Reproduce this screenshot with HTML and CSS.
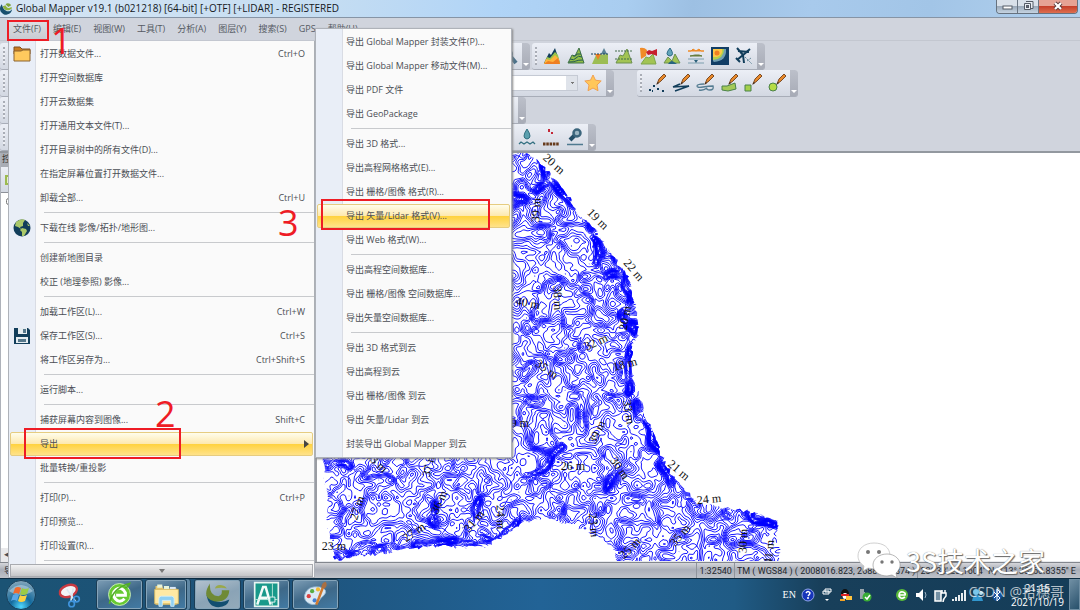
FILE: index.html
```html
<!DOCTYPE html>
<html lang="zh-CN">
<head>
<meta charset="utf-8">
<title>Global Mapper v19.1</title>
<link rel="stylesheet" href="styles.css">
</head>
<body>
<header class="titlebar">
  <svg class="app-icon" viewBox="0 0 14 14"><path d="M2 3A6.500 6.500 0 1 0 13 8C11 12 4 12 2 3z" fill="#17506f"/><path d="M3 5c1 5 7 6 10 2l-1-1c-2 2-5 1-6-2z" fill="#8fb540"/><path d="M6 3c2-2 5-1 6 1l-3 2z" fill="#7fa43a"/></svg>
  <h1 class="title">Global Mapper v19.1 (b021218) [64-bit] [+OTF] [+LIDAR] - REGISTERED</h1>
  <div class="window-buttons">
    <button class="wb" aria-label="最小化"><svg viewBox="0 0 20 13"><rect x="6" y="6" width="9" height="3" fill="#fff" stroke="#555c66"/></svg></button>
    <button class="wb" aria-label="还原"><svg viewBox="0 0 20 13"><path d="M8 1.500h7v7h-2M6.500 3.500h6v6h-6z" fill="#e8edf3" stroke="#555c66"/><rect x="8.500" y="5.500" width="2" height="2" fill="#667" stroke="#555c66"/></svg></button>
    <button class="wb wb-close" aria-label="关闭"><svg viewBox="0 0 20 13"><path d="M7 3l6 6M13 3l-6 6" stroke="#5b3a3a" stroke-width="4"/><path d="M7 3l6 6M13 3l-6 6" stroke="#fff" stroke-width="2.200"/></svg></button>
  </div>
</header>

<nav class="menubar">
  <button class="mb mb-open">文件(F)</button><button class="mb">编辑(E)</button><button class="mb">视图(W)</button><button class="mb">工具(T)</button><button class="mb">分析(A)</button><button class="mb">图层(Y)</button><button class="mb">搜索(S)</button><button class="mb">GPS</button><button class="mb">帮助(H)</button>
</nav>

<section class="toolbars">
  <div class="row">
    <div class="bar bar-a"><span class="grip"></span><span class="tools tools-end"><button class="tool" aria-label="查找"><svg viewBox="0 0 18 18"><circle cx="8" cy="7" r="4" fill="none" stroke="#4b7189" stroke-width="2"/><path d="M11 10l5 6" stroke="#4b7189" stroke-width="4"/></svg></button></span><span class="more"></span></div>
    <div class="bar"><span class="grip"></span><span class="tools">
      <button class="tool" aria-label="地形着色"><svg viewBox="0 0 18 18"><path d="M1 16l5-10 2 2 4-7 5 15z" fill="#123e5b"/><path d="M1 17l3-7 3 1 5-6 3 3 2 9z" fill="#9bc44a"/><path d="M1 17l2-5 4 1 5-5 4 4 1 5z" fill="#ffb43c"/><path d="M1 17l4-3 5 1 5-4 2 6z" fill="#ef7f22"/></svg></button>
      <button class="tool" aria-label="等高线"><svg viewBox="0 0 18 18"><path d="M1 16l4-8 3 1 4-8 5 15z" fill="#92bf48" stroke="#3d7048"/><path d="M3 12q4 2 6-1t6-1M2 15q5 0 7-1t7-1M6 9q3 1 4-2h4" fill="none" stroke="#245a55"/></svg></button>
      <button class="tool" aria-label="剖面"><svg viewBox="0 0 18 18"><path d="M10 7l3-6 3 6z" fill="#5b8296"/><path d="M1 17l4-9 12-1v10z" fill="#9cbd54"/><path d="M4 7h6l-3 6z" fill="#ef7f22"/><path d="M0 7h17" stroke="#123e5b" stroke-dasharray="2 1"/></svg></button>
      <button class="tool" aria-label="填挖"><svg viewBox="0 0 18 18"><path d="M1 16l4-8 3 1 4-7 5 14z" fill="#a2c454" stroke="#6d9150"/><path d="M0 4h17M0 12h17" stroke="#456d4d" stroke-dasharray="2 1"/></svg></button>
      <button class="tool" aria-label="视域"><svg viewBox="0 0 18 18"><path d="M2 17l5-7 3 1 4-4 3 10z" fill="#a2c454" stroke="#7fa64c"/><path d="M1 1q4-1 7 2l-1 6-5 3z" fill="#f08b29"/><path d="M7 5l3-2 3 1 5-2v7l-5-2-4 1z" fill="#c71f2d"/></svg></button>
      <button class="tool" aria-label="流域"><svg viewBox="0 0 18 18"><path d="M1 16l4-6 4 4 3-7 5 9z" fill="#a2c454" stroke="#6d9150"/><path d="M7 1q-6 7 0 8 5-1 0-8z" fill="#63a5ba" stroke="#2c6b85"/><path d="M5 17q3-5 6-2l3 2z" fill="#27647f"/></svg></button>
      <button class="tool" aria-label="分割"><svg viewBox="0 0 18 18"><path d="M1 4h3l2-2 3 2 3-2 2 2h3z" fill="#ef8a26" stroke="#ef8a26"/><path d="M3 9h12l-3-1-4 0z" fill="#667d3c" stroke="#667d3c"/><path d="M1 12h16M1 16h16" stroke="#7d9fae"/><path d="M7 13h4l-2 3z" fill="#2a607a"/></svg></button>
      <button class="tool" aria-label="栅格"><svg viewBox="0 0 18 18"><path d="M0 0h18v18H0z" fill="#123e66"/><path d="M2 2h13q1 12-12 13l-1-1z" fill="#6f9eb1"/><path d="M2 2h11q0 10-11 11z" fill="#b3cf4b"/><path d="M2 2h9q1 6-5 8H2z" fill="#ffc846"/><circle cx="6" cy="6" r="2.500" fill="#ef7f22"/></svg></button>
      <button class="tool" aria-label="飞行"><svg viewBox="0 0 18 18"><path d="M8 8L2 1M7 9L15 2M3 4l11 1M8 8l1 8M8 8l-6 5M1 11l4 4" stroke="#123e5b" stroke-width="2"/><path d="M10 10l7 7M12 14l4-3" stroke="#678a9c" stroke-dasharray="2 1"/></svg></button>
    </span><span class="more"></span></div>
  </div>
  <div class="row">
    <div class="bar bar-b"><span class="grip"></span><span class="tools tools-end"><select class="combo" aria-label="收藏"><option></option></select><button class="tool" aria-label="星标"><svg viewBox="0 0 18 18"><path d="M9 1l2.500 5.200 5.700.8-4.200 4 1 5.700L9 14l-5 2.700 1-5.700-4.200-4 5.700-.8z" fill="#ffc75a" stroke="#f0a050"/></svg></button></span><span class="more"></span></div>
    <div class="bar bar-draw"><span class="grip"></span><span class="tools">
      <button class="tool" aria-label="画点"><svg viewBox="0 0 18 18"><path d="M1 16h2M5 12h2M9 15h2M14 17h2M4 17h1" stroke="#123e5b" stroke-width="2"/><use href="#brush"/></svg></button>
      <button class="tool" aria-label="画线"><svg viewBox="0 0 18 18"><path d="M1 13l16-1L3 17M1 13l7-3" fill="none" stroke="#123e5b" stroke-width="1.500"/><use href="#brush"/></svg></button>
      <button class="tool" aria-label="手绘线"><svg viewBox="0 0 18 18"><path d="M8 10q-7 0-7 2t6 1 10-1q1 4-3 4t-3-2q-4 3-8 2" fill="none" stroke="#557d92" stroke-width="1.300"/><use href="#brush"/></svg></button>
      <button class="tool" aria-label="画面"><svg viewBox="0 0 18 18"><path d="M2 12l5 0 8-3 1 6-8 2-6-1z" fill="#a4c957" stroke="#4a8248"/><use href="#brush"/></svg></button>
      <button class="tool" aria-label="画矩形"><svg viewBox="0 0 18 18"><path d="M1 11h6v6H1z" fill="#a4d04b" stroke="#4a8248"/><use href="#brush"/></svg></button>
      <button class="tool" aria-label="画圆"><svg viewBox="0 0 18 18"><circle cx="5" cy="13" r="4" fill="#b6dc45" stroke="#4a8248"/><use href="#brush"/></svg></button>
    </span><span class="more"></span></div>
  </div>
  <div class="row"><div class="bar bar-c"><span class="grip"></span><span class="tools"></span><span class="more"></span></div></div>
  <div class="row"><div class="bar bar-d"><span class="grip"></span><span class="tools tools-end">
      <button class="tool" aria-label="水位"><svg viewBox="0 0 18 18"><path d="M9 1q-6 9 0 10 6-1 0-10z" fill="#5ba0ae" stroke="#326f80"/><path d="M1 16l2-2 3 2 3-2 3 2 3-2 2 2" fill="none" stroke="#326f80" stroke-width="1.300"/></svg></button>
      <button class="tool" aria-label="点密度"><svg viewBox="0 0 18 18"><path d="M6 1h2v3H6zM9 4h2v2H9z" fill="#c32736"/><path d="M1 16h16" stroke="#673b1c" stroke-width="3" stroke-dasharray="2.500 .8"/></svg></button>
      <button class="tool" aria-label="设置"><svg viewBox="0 0 18 18"><path d="M1 16.500h16" stroke="#4f7a90" stroke-width="1.500"/><path d="M4 12l5-5" stroke="#244f68" stroke-width="4"/><circle cx="11" cy="5" r="3.500" fill="#9ab5c2" stroke="#3b657c" stroke-width="2.500"/></svg></button>
  </span><span class="more"></span></div></div>
</section>

<main class="workspace">
  <aside class="side">
    <div class="side-title">控</div>
    <div class="side-tools"><svg viewBox="0 0 12 12"><path d="M1 3h10v8H1z" fill="#e5efc8" stroke="#9cba50" stroke-width="2"/></svg></div>
    <div class="side-body"><input class="side-check" type="checkbox" aria-label="图层"></div>
    <div class="side-scroll">◂</div>
  </aside>
  <div class="map"><svg class="map-canvas" id="map" width="764" height="408" viewBox="316 153 764 408" role="img" aria-label="等高线地图"></svg></div>
</main>

<footer class="status">
  <span class="status-main">导</span><span class="status-cell">1:32540</span><span class="status-cell">TM ( WGS84 ) ( 2008016.823, 2688435.874 )</span><span class="status-cell status-pos">23° 38' 23.1604" N, 113° 33' 50.8355" E</span>
</footer>

<div class="taskbar">
  <button class="start" aria-label="开始"><svg viewBox="0 0 32 32"><defs><radialGradient id="orb" cx=".5" cy=".9" r=".9"><stop offset="0" stop-color="#4fd8ff"/><stop offset=".4" stop-color="#146a9d"/><stop offset="1" stop-color="#88a9bc"/></radialGradient></defs><circle cx="16" cy="16" r="14.500" fill="url(#orb)" stroke="#173f5a"/><path d="M4 12Q16 0 28 12q-12 8-24 0z" fill="#dcecf5" opacity=".45"/><path d="M10 9q3-2 6 0l-2 6q-3-2-6 0z" fill="#ef6a2e"/><path d="M17 9q3 2 7 0l-2 6q-4 2-7 0z" fill="#9ccb45"/><path d="M8 16q3-2 6 0l-2 6q-3-2-6 0z" fill="#5aa7e8"/><path d="M15 16q3 2 7 0l-2 6q-4 2-7 0z" fill="#fbd043"/></svg></button>
  <button class="pin" aria-label="截图工具"><svg viewBox="0 0 32 32"><ellipse cx="14" cy="11" rx="11" ry="7" transform="rotate(-20 14 11)" fill="#f3f3f6" stroke="#c93a42" stroke-width="3"/><path d="M12 9l11 15M20 8l-3 16" stroke="#dce8f1" stroke-width="2"/><circle cx="24" cy="21" r="3.500" fill="none" stroke="#3f93dc" stroke-width="2"/><circle cx="18" cy="27" r="3.500" fill="none" stroke="#3f93dc" stroke-width="2"/></svg></button>
  <button class="task" aria-label="浏览器"><svg viewBox="0 0 32 32"><circle cx="16" cy="16" r="13" fill="#67c932" stroke="#d8f3c9"/><path d="M22 21Q16 27 11 21T12 10q7-4 11 4l0 3H12" fill="none" stroke="#fff" stroke-width="3.500"/><path d="M4 27Q8 8 28 3q-2 5-6 5" fill="none" stroke="#51ae27" stroke-width="2"/></svg></button>
  <button class="task task-stack" aria-label="资源管理器"><svg viewBox="0 0 32 32"><path d="M3 6h8l1 3h16v19H3z" fill="#e5c46c"/><path d="M5 4h6v4H5zM13 6h6v4h-6z" fill="#e9f4d9"/><path d="M20 7h7v4h-7z" fill="#dae8f7"/><path d="M2 10h28v17H2z" fill="#ffe9a3" stroke="#d8ba61"/><path d="M7 30v-9q0-3 3-3h12q3 0 3 3v9h-4v-7H11v7z" fill="#8fd0f2" stroke="#d2f0ff"/></svg></button>
  <button class="task task-active" aria-label="Global Mapper"><svg viewBox="0 0 32 32"><path d="M3 16Q5 31 17 31q11 0 13-9-14 8-27-6z" fill="#124e70"/><path d="M7 3Q-4 20 12 24q17 2 18-13l-9 0q1 6-4 7Q6 18 7 3z" fill="#6f8a35"/><path d="M13 9q1-5 8-4 5 1 6 4-6-2-14 0z" fill="#9aa94a"/></svg></button>
  <button class="task" aria-label="AutoCAD"><svg viewBox="0 0 32 32"><path d="M2 2h28v28H2z" fill="#19998a" stroke="#e8f5f2" stroke-width="2"/><path d="M5 28L12 7h3l6 21M8 20h9" fill="none" stroke="#f3fbf8" stroke-width="3"/><path d="M23 3v26M3 22h26" stroke="#c7eee2"/><path d="M20 19h6v6h-6z" fill="#19998a" stroke="#fff"/></svg></button>
  <button class="task" aria-label="画图"><svg viewBox="0 0 32 32"><path d="M3 17Q6 5 21 7q11 3 5 10-4 3-6 7-4 6-11 3T3 17z" fill="#dbe9f4" stroke="#8fb3ce"/><circle cx="8" cy="18" r="2.500" fill="#da4141"/><circle cx="12" cy="12" r="2.500" fill="#59ac42"/><circle cx="19" cy="10" r="2.500" fill="#f1ba35"/><circle cx="15" cy="23" r="2.500" fill="#4380d5"/><path d="M17 28l8-21" stroke="#d27b2f" stroke-width="3"/><path d="M23 8q0-6 5-7 3 4-1 8z" fill="#a96f42"/></svg></button>
  <div class="tray">
    <span class="ime">EN</span>
    <svg class="ti" viewBox="0 0 14 14"><circle cx="7" cy="7" r="6" fill="#1735bb" stroke="#8fa4e8"/><path d="M5 5q2-3 4 0 0 1-2 3m0 1v2" fill="none" stroke="#fff" stroke-width="1.500"/></svg>
    <svg class="ti" viewBox="0 0 14 14"><path d="M5 1h6v3H5zM3 3h6v3H3z" fill="#24506c" stroke="#fff"/><path d="M5 11h4l-2 2z" fill="#fff"/></svg>
    <svg class="ti" viewBox="0 0 14 14"><ellipse cx="6" cy="6" rx="4" ry="5" fill="#111"/><ellipse cx="6" cy="8" rx="2.500" ry="3" fill="#fff"/><path d="M2 7h8" stroke="#d22" stroke-width="2"/><path d="M7 8h6v4H7z" fill="#ffc33d"/><path d="M1 12h5" stroke="#f4a223" stroke-width="2"/></svg>
    <svg class="ti ti-gap" viewBox="0 0 14 14"><path d="M2 1h4v3h1v7H2z" fill="#99a4ac"/><circle cx="9" cy="9" r="4.500" fill="#39ac35"/><path d="M7 9l2 2 3-4" fill="none" stroke="#fff" stroke-width="1.500"/></svg>
    <svg class="ti" viewBox="0 0 14 14"><circle cx="7" cy="7" r="6" fill="#59ba39"/><path d="M10 9q-4 3-6-1 0-5 4-4 3 1 2 3H4" fill="none" stroke="#fff" stroke-width="1.700"/></svg>
    <svg class="ti" viewBox="0 0 14 14"><path d="M2 5h3l4-4v12L5 9H2z" fill="#fff"/><path d="M11 4q2 3 0 6" fill="none" stroke="#9bb3c4"/></svg>
    <svg class="ti" viewBox="0 0 14 14"><path d="M2 3h6v10H2z" fill="#7591a5" stroke="#fff" stroke-width="1.500"/><path d="M8 5h5v3q-3 3-3 6M9 5V2m3 3V2" fill="none" stroke="#fff" stroke-width="1.500"/></svg>
    <svg class="ti" viewBox="0 0 14 14"><path d="M1 13v-2M4 13V9M7 13V7M10 13V5M13 13V2" stroke="#fff" stroke-width="1.800"/></svg>
    <svg class="ti" viewBox="0 0 14 14"><circle cx="5" cy="4" r="3" fill="#79c6eb"/><path d="M1 13q1-7 5-6 5 0 6 6z" fill="#3196ce"/><circle cx="10" cy="5" r="2" fill="#b9e2f1"/></svg>
    <svg class="ti" viewBox="0 0 14 14"><ellipse cx="7" cy="7" rx="5" ry="6" fill="#1553a0"/><path d="M4 4l6 6-3 3V1l3 3-6 6" fill="none" stroke="#fff"/></svg>
    <time class="clock">21:15<br>2021/10/19</time>
    <button class="desk" aria-label="显示桌面"></button>
  </div>
</div>

<div class="popup popup-file" role="menu">
  <button class="mi"><svg class="mi-icon" viewBox="0 0 18 18"><path d="M1 2h6l2 2h8v5H1z" fill="#c97c21" stroke="#805022"/><path d="M1 6h7l2-1h7v11H1z" fill="#ffc95e" stroke="#8a6330"/></svg>打开数据文件...<kbd>Ctrl+O</kbd></button>
  <button class="mi">打开空间数据库</button>
  <button class="mi">打开云数据集</button>
  <button class="mi">打开通用文本文件(T)...</button>
  <button class="mi">打开目录树中的所有文件(D)...</button>
  <button class="mi">在指定屏幕位置打开数据文件...</button>
  <button class="mi">卸载全部...<kbd>Ctrl+U</kbd></button>
  <hr>
  <button class="mi"><svg class="mi-icon" viewBox="0 0 18 18"><circle cx="9" cy="9" r="8.500" fill="#123e5b"/><path d="M3 3q5-4 9-2l-2 3 0 3-3 1 1 2-3-2-3-1zM9 9l4 1 1 2-3 5-2 0v-4l-2-2zM14 4l3 3-2 0z" fill="#abc96a"/></svg>下载在线 影像/拓扑/地形图...</button>
  <hr>
  <button class="mi">创建新地图目录</button>
  <button class="mi">校正 (地理参照) 影像...</button>
  <hr>
  <button class="mi">加载工作区(L)...<kbd>Ctrl+W</kbd></button>
  <button class="mi"><svg class="mi-icon" viewBox="0 0 18 18"><path d="M1 1h14l2 2v14H1z" fill="#123e5b"/><path d="M5 1h9v6H5zM3 10h12v6H3z" fill="#e6edf1"/><path d="M10 2h3v4h-3zM5 12h8v3H5z" fill="#56788c"/></svg>保存工作区(S)...<kbd>Ctrl+S</kbd></button>
  <button class="mi">将工作区另存为...<kbd>Ctrl+Shift+S</kbd></button>
  <hr>
  <button class="mi">运行脚本...</button>
  <hr>
  <button class="mi">捕获屏幕内容到图像...<kbd>Shift+C</kbd></button>
  <button class="mi mi-hot">导出<svg class="arrow" viewBox="0 0 5 8"><path d="M0 0l5 4-5 4z" fill="#444"/></svg></button>
  <button class="mi">批量转换/重投影</button>
  <hr>
  <button class="mi">打印(P)...<kbd>Ctrl+P</kbd></button>
  <button class="mi">打印预览...</button>
  <button class="mi">打印设置(R)...</button>
  <hr>
  <button class="scroller" aria-label="更多"><svg viewBox="0 0 6 4"><path d="M0 0h6L3 4z" fill="#777"/></svg></button>
</div>

<div class="popup popup-export" role="menu">
  <button class="mi">导出 Global Mapper 封装文件(P)...</button>
  <button class="mi">导出 Global Mapper 移动文件(M)...</button>
  <button class="mi">导出 PDF 文件</button>
  <button class="mi">导出 GeoPackage</button>
  <hr>
  <button class="mi">导出 3D 格式...</button>
  <button class="mi">导出高程网格格式(E)...</button>
  <button class="mi">导出 栅格/图像 格式(R)...</button>
  <button class="mi mi-hot">导出 矢量/Lidar 格式(V)...</button>
  <button class="mi">导出 Web 格式(W)...</button>
  <hr>
  <button class="mi">导出高程空间数据库...</button>
  <button class="mi">导出 栅格/图像 空间数据库...</button>
  <button class="mi">导出矢量空间数据库...</button>
  <hr>
  <button class="mi">导出 3D 格式到云</button>
  <button class="mi">导出高程到云</button>
  <button class="mi">导出 栅格/图像 到云</button>
  <button class="mi">导出 矢量/Lidar 到云</button>
  <button class="mi">封装导出 Global Mapper 到云</button>
</div>

<div class="mark mark-1"></div><span class="num num-1">1</span>
<div class="mark mark-2"></div><span class="num num-2">2</span>
<div class="mark mark-3"></div><span class="num num-3">3</span>

<div class="brand"><svg viewBox="0 0 44 38"><path d="M17 1C7 1 1 7 1 14c0 4 2 7 6 10l-1 5 5-3c12 3 22-3 22-12S26 1 17 1z" fill="#fff" stroke="#bbb" stroke-width=".7"/><path d="M30 12c-8 0-14 5-14 11s6 11 14 11l5-1 5 3-1-5c9-8 2-19-9-19z" fill="#fff" stroke="#999" stroke-width=".7"/><circle cx="11" cy="10" r="2" fill="#777"/><circle cx="22" cy="10" r="2" fill="#777"/><circle cx="25" cy="20" r="1.700" fill="#777"/><circle cx="35" cy="20" r="1.700" fill="#777"/></svg><span>3S技术之家</span></div>
<div class="credit">CSDN @拾穗哥</div>

<svg class="defs" aria-hidden="true"><defs><g id="brush"><path d="M9 10l2-5 5-5 2 2-5 5z" fill="#e8892b" stroke="#7c4b24"/><path d="M8 11l2-3 1 1z" fill="#3a2a20"/></g></defs></svg>
<script src="map.js"></script>
</body>
</html>
```

FILE: styles.css
```css
* { box-sizing: border-box; }
body {
  margin: 0;
  min-height: 100vh;
  display: flex;
  flex-direction: column;
  position: relative;
  overflow: hidden;
  background: #d0d4dd;
  color: #4a4e55;
  font: 9px/12px "Open Sans", "Noto Sans CJK SC", sans-serif;
}
button { font: inherit; color: inherit; border: 0; padding: 0; margin: 0; background: none; text-align: left; white-space: nowrap; }
svg { display: block; }
.defs { position: absolute; width: 0; height: 0; }

.titlebar {
  display: flex;
  align-items: flex-start;
  height: 18px;
  padding-right: 2px;
  background: linear-gradient(100deg, #d5e5f4 0, #c5ddf2 30%, #b0d4f7 46%, #a9cdf0 58%, #9dc0e3 64%, #a8caec 75%, #a2c5e7 86%, #b2d0ed 100%);
  border-bottom: 1px solid #8694a5;
}
.app-icon { width: 13px; height: 14px; margin: 1px 3px 0 0; }
.title { flex: 1; margin: 0; font: 400 10px/16px "Open Sans", sans-serif; color: #15181c; white-space: nowrap; }
.window-buttons { display: flex; border: 1px solid #66727f; border-top: 0; border-radius: 0 0 4px 4px; overflow: hidden; }
.wb { width: 21px; height: 13px; border-right: 1px solid #6a7683; background: linear-gradient(#d9e1ea 50%, #9cabbb 50%, #c6d4e2); }
.wb svg { width: 20px; height: 13px; }
.wb-close { width: 38px; border: 0; background: linear-gradient(#e6a294 45%, #c6402b 50%, #dd6f50); }
.wb-close svg { margin: 0 auto; }

.menubar { display: flex; height: 23px; padding: 1px 8px; gap: 2px; border-bottom: 1px solid #c3c7d0; }
.mb { padding: 0 5px; color: #555a63; }
.mb-open { background: linear-gradient(#dfe1e5, #c9ccd2); }

.toolbars { display: flex; flex-direction: column; height: 112px; padding: 2px 0 0; border-bottom: 2px solid #93989f; }
.row { display: flex; gap: 2px; height: 27px; }
.bar { display: flex; height: 27px; border-radius: 3px; overflow: hidden; background: linear-gradient(#eceff6, #d3d8e2); border-bottom: 1px solid #a8adb8; }
.bar-a { width: 530px; }
.bar-b { width: 614px; }
.bar-c { width: 526px; }
.bar-d { width: 596px; }
.bar-draw { margin-left: 21px; }
.grip { width: 2px; margin: 4px 6px 4px 3px; background: repeating-linear-gradient(#a9adb6 0 2px, #eef0f5 2px 4px); }
.tools { flex: 1; display: flex; align-items: center; gap: 6px; padding-right: 4px; }
.tools-end { justify-content: flex-end; }
.tool { width: 18px; height: 18px; }
.tool svg { width: 18px; height: 18px; }
.more { width: 8px; background: linear-gradient(#bcc0ca, #a7abb6); display: flex; align-items: flex-end; justify-content: center; padding-bottom: 3px; }
.more::after { content: ""; border: 3px solid transparent; border-top-color: #fff; border-bottom: 0; }
.combo {
  width: 150px;
  height: 16px;
  border: 1px solid #c5cad4;
  border-radius: 0;
  appearance: none;
  background:
    linear-gradient(#777, #777) 142px 6px / 3px 1px no-repeat,
    linear-gradient(#777, #777) 143px 7px / 1px 1px no-repeat,
    linear-gradient(90deg, #fff 137px, #dfe3ea 137px);
}

.workspace { flex: 1; display: flex; min-height: 0; }
.side { width: 317px; display: flex; flex-direction: column; border-left: 1px solid #aeb2ba; border-right: 2px solid #9a9da3; background: #d9dde5; }
.side-title { height: 14px; padding-left: 1px; background: #a9adb5; color: #333; }
.side-tools { height: 26px; padding: 6px 4px; background: linear-gradient(#eceff6, #d3d8e2); border-bottom: 1px solid #8d9199; }
.side-tools svg { width: 12px; height: 12px; }
.side-body { flex: 1; padding: 5px; background: #fff; }
.side-check { width: 7px; height: 7px; margin: 0; display: block; }
.side-scroll { height: 14px; background: #e9e9eb; padding-left: 3px; }
.map { flex: 1; background: #fff; overflow: hidden; border-bottom: 1px solid #e8eaed; }
.contour { fill: none; stroke: #00f; stroke-width: .9; }
.map-label { font: 12px "Liberation Serif", serif; fill: #111; text-anchor: middle; }

.status { display: flex; height: 16px; font: 9px/16px Roboto, "Noto Sans CJK SC", sans-serif; color: #24282d; background: linear-gradient(#d5d6da, #a9aeb8 45%, #bfc2c9); border-top: 1px solid #83878e; }
.status-main { flex: 1; padding-left: 4px; }
.status-cell { padding: 0 2px; border-left: 1px solid #8f949c; white-space: nowrap; }
.status-pos { padding-right: 4px; }

.taskbar { display: flex; align-items: stretch; height: 32px; background: linear-gradient(90deg, #1b5374 0, #1d527a 25%, #226396 50%, #205b85 68%, #183f5a 76%, #153d59 100%); border-top: 1px solid #0c2c42; }
.start, .pin { display: flex; align-items: center; }
.start { width: 45px; padding-left: 5px; }
.start svg { width: 32px; height: 32px; }
.pin { width: 51px; padding-left: 12px; }
.pin svg { width: 26px; height: 26px; }
.task { display: flex; align-items: center; justify-content: center; width: 47px; margin-right: 2px; border: 1px solid #1b3d55; border-radius: 3px; background: linear-gradient(160deg, #7e9eb6, #3e6888 50%, #427ba5); box-shadow: inset 0 0 0 1px #86a5ba; }
.task svg { width: 27px; height: 27px; }
.task-stack { width: 42px; margin-right: 7px; box-shadow: inset 0 0 0 1px #86a5ba, 3px 0 0 #5f87a4, 4px 0 0 #1b3d55; }
.task-active { background: linear-gradient(160deg, #b4c3cf, #8aa3b6 55%, #94abba); }
.tray { display: flex; align-items: center; gap: 5px; margin-left: auto; color: #fff; }
.ime { font: 10px/12px "Liberation Serif", serif; }
.ti { width: 14px; height: 14px; }
.ti-gap { margin-right: 18px; }
.clock { font-size: 10px; line-height: 14px; text-align: center; margin-left: 2px; }
.desk { width: 11px; align-self: stretch; border: 1px solid #6f8ea3; background: linear-gradient(135deg, #6f8ea3, #27506b); }

.popup { position: absolute; display: flex; flex-direction: column; background: linear-gradient(90deg, #e9eef7 26px, #d9dce4 26px 27px, #fafafa 27px); border: 1px solid #aeb2b9; }
.popup-file { left: 8px; top: 41px; width: 307px; border-top: 0; padding-top: 1px; }
.popup-export { left: 315px; top: 28px; width: 197px; padding: 1px 0; box-shadow: 1px 1px 2px #888; }
.mi { position: relative; display: flex; align-items: center; height: 24px; padding: 0 9px 0 31px; }
.popup-export .mi { padding-left: 30px; }
.mi-icon { position: absolute; left: 4px; top: 3px; width: 18px; height: 18px; }
.mi kbd { margin-left: auto; font: inherit; }
.mi-hot { margin: 0 1px; padding-left: 29px; padding-right: 3px; border: 1px solid #e6cc80; border-radius: 2px; background: linear-gradient(#fffdec, #fde9b0 48%, #ffd23d 50%, #ffe28a); }
.popup-export .mi-hot { padding-left: 28px; }
.arrow { width: 5px; height: 8px; margin-left: auto; }
.popup hr { height: 1px; margin: 2px 0 3px 35px; border: 0; background: #c8cacd; }
.scroller { height: 13px; margin: 0 1px; display: flex; align-items: center; justify-content: center; border: 1px solid #a9abb0; background: linear-gradient(#f2f2f3, #c4c5c8); }
.scroller svg { width: 6px; height: 4px; }

.mark { position: absolute; border: 2px solid #ee1c25; }
.mark-1 { left: 7px; top: 20px; width: 42px; height: 21px; }
.mark-2 { left: 24px; top: 428px; width: 157px; height: 31px; }
.mark-3 { left: 321px; top: 199px; width: 169px; height: 31px; }
.num { position: absolute; color: #ee1c25; font: 36px/36px "Open Sans", sans-serif; }
.num-1 { left: 51px; top: 23px; }
.num-2 { left: 155px; top: 396px; }
.num-3 { left: 278px; top: 205px; }

.brand { position: absolute; right: 35px; bottom: 30px; display: flex; align-items: center; gap: 5px; color: #fff; font: 27px/36px "Noto Sans CJK SC", sans-serif; text-shadow: 1px 1px 1px #666, 0 0 1px #777; }
.brand svg { width: 44px; height: 38px; }
.credit { position: absolute; right: 16px; bottom: 9px; color: #ffffffb0; font: 14px/18px "Open Sans", "Noto Sans CJK SC", sans-serif; }
```

FILE: map.js
```js
const NS = "http://www.w3.org/2000/svg";
const map = document.getElementById("map");

const outline = [
  [321, 440], [321, 153], [528, 153], [545, 170], [556, 183], [570, 200], [575, 210], [592, 228],
  [600, 240], [606, 248], [614, 259], [626, 276], [631, 290], [635, 312], [637, 336], [630, 345],
  [630, 365], [632, 382], [640, 402], [648, 425], [658, 450], [668, 470], [682, 488], [697, 503],
  [722, 507], [750, 512], [775, 521], [780, 562], [616, 562], [611, 547], [592, 535], [567, 523],
  [540, 518], [522, 523], [505, 533], [487, 546], [465, 548], [430, 546], [395, 551], [360, 556],
  [333, 560], [328, 530], [324, 480]
];

const labels = [
  ["20 m", 553, 164, 42], ["19 m", 597, 219, 45], ["22 m", 633, 270, 50], ["39 m", 535, 210, -86],
  ["40 m", 527, 303, 10], ["38 m", 557, 298, 88], ["20 m", 624, 318, -80], ["32 m", 595, 342, -25],
  ["18 m", 624, 364, -15], ["35 m", 546, 369, 35], ["39 m", 516, 423, 0], ["33 m", 628, 412, 80],
  ["39 m", 596, 432, -65], ["30 m", 619, 468, 55], ["26 m", 572, 466, 0], ["21 m", 678, 470, 40],
  ["24 m", 708, 499, -6], ["24 m", 500, 517, 88], ["23 m", 593, 525, 85], ["25 m", 629, 548, -45],
  ["35 m", 679, 535, -50], ["30 m", 742, 541, -88], ["41 m", 768, 552, -85], ["33 m", 376, 462, 45],
  ["37 m", 428, 465, -75], ["27 m", 356, 508, -72], ["36 m", 438, 502, -65], ["31 m", 473, 521, -50],
  ["27 m", 413, 532, -35], ["23 m", 333, 546, 0]
];

// Steep slopes: strength, then the line they follow
const slopes = [
  [8, [[530, 153], [541, 165], [548, 178], [559, 189], [570, 203]]],
  [6, [[584, 218], [592, 230], [598, 240], [599, 256], [592, 270], [602, 278], [620, 278]]],
  [8, [[612, 258], [622, 275], [628, 292], [627, 305], [622, 318], [632, 330]]],
  [5, [[512, 199], [529, 200]]],
  [4, [[533, 188], [552, 182]]],
  [6, [[628, 345], [626, 364], [629, 378], [627, 388]]],
  [7, [[638, 405], [648, 428], [660, 460], [674, 483], [696, 502]]],
  [5, [[725, 509], [748, 513], [772, 522]]],
  [5, [[332, 556], [360, 553], [392, 548]]],
  [5, [[420, 543], [438, 542], [470, 545], [487, 542], [518, 522]]],
  [5, [[530, 475], [543, 462], [548, 452], [562, 442]]],
  [5, [[432, 506], [436, 524], [445, 516]]],
  [4, [[612, 474], [608, 486]]],
  [4, [[476, 520], [480, 500]]],
  [4, [[330, 470], [345, 462]]]
];

function add(parent, name, attrs, text) {
  const el = document.createElementNS(NS, name);
  for (const key in attrs) el.setAttribute(key, attrs[key]);
  if (text) el.textContent = text;
  parent.appendChild(el);
  return el;
}

function hash(x, y, seed) {
  let h = Math.imul(x, 374761393) + Math.imul(y, 668265263) + Math.imul(seed, 974634777);
  h = Math.imul(h ^ (h >>> 13), 1274126177);
  return ((h ^ (h >>> 16)) >>> 0) / 4294967296;
}

function noise(x, y, size, seed) {
  const gx = Math.floor(x / size), gy = Math.floor(y / size);
  let u = x / size - gx, v = y / size - gy;
  u = u * u * (3 - 2 * u);
  v = v * v * (3 - 2 * v);
  const top = hash(gx, gy, seed) * (1 - u) + hash(gx + 1, gy, seed) * u;
  const low = hash(gx, gy + 1, seed) * (1 - u) + hash(gx + 1, gy + 1, seed) * u;
  return top * (1 - v) + low * v;
}

function distance(x, y, a, b) {
  const dx = b[0] - a[0], dy = b[1] - a[1];
  const t = Math.max(0, Math.min(1, ((x - a[0]) * dx + (y - a[1]) * dy) / (dx * dx + dy * dy)));
  return Math.hypot(x - a[0] - t * dx, y - a[1] - t * dy);
}

function height(x, y) {
  const wx = x + 12 * noise(x, y, 13, 7), wy = y + 12 * noise(x, y, 13, 8);
  let z = 3 * noise(wx, wy, 34, 1) + 2.6 * noise(wx, wy, 14, 2) + 1.1 * noise(x, y, 6, 3);
  for (const [strength, line] of slopes) {
    let d = 99;
    for (let i = 0; i + 1 < line.length; i++) d = Math.min(d, distance(wx - 6, wy - 6, line[i], line[i + 1]));
    if (d < 14) z += strength * noise(x, y, 9, 4) * Math.exp(-d * d / 14);
  }
  return z;
}

// Marching squares over the height field
function contours(x0, y0, x1, y1, cell, step) {
  const parts = [];
  for (let y = y0; y < y1; y += cell) {
    for (let x = x0; x < x1; x += cell) {
      const p = [[x, y], [x + cell, y], [x + cell, y + cell], [x, y + cell]];
      const h = p.map(([a, b]) => height(a, b));
      const last = Math.max(...h);
      for (let z = Math.ceil(Math.min(...h) / step) * step; z < last; z += step) {
        const cuts = [];
        for (let i = 0; i < 4; i++) {
          const j = (i + 1) % 4;
          if ((h[i] < z) !== (h[j] < z)) {
            const t = (z - h[i]) / (h[j] - h[i]);
            cuts.push((p[i][0] + t * (p[j][0] - p[i][0])).toFixed(1) + " " + (p[i][1] + t * (p[j][1] - p[i][1])).toFixed(1));
          }
        }
        for (let i = 0; i + 1 < cuts.length; i += 2) parts.push("M" + cuts[i] + "L" + cuts[i + 1]);
      }
    }
  }
  return parts.join("");
}

// Break each side of the outline into short uneven pieces
const coast = [];
outline.forEach((a, i) => {
  const b = outline[(i + 1) % outline.length];
  const n = Math.ceil(Math.hypot(b[0] - a[0], b[1] - a[1]) / 3);
  for (let k = 0; k < n; k++) {
    const x = a[0] + (b[0] - a[0]) * k / n + 4 * hash(i, k, 31) - 2;
    const y = a[1] + (b[1] - a[1]) * k / n + 4 * hash(i, k, 32) - 2;
    coast.push(x.toFixed(1) + "," + y.toFixed(1));
  }
});

const clip = add(add(map, "defs", {}), "clipPath", { id: "land" });
add(clip, "polygon", { points: coast.join(" ") });
const land = add(map, "g", { "clip-path": "url(#land)" });
add(land, "path", { class: "contour", d: contours(510, 152, 668, 458, 2, 0.32) + contours(318, 458, 784, 562, 2, 0.32) });

for (const [text, x, y, angle] of labels) {
  add(map, "text", { class: "map-label", x: x, y: y + 4, transform: `rotate(${angle} ${x} ${y})` }, text);
}
```
